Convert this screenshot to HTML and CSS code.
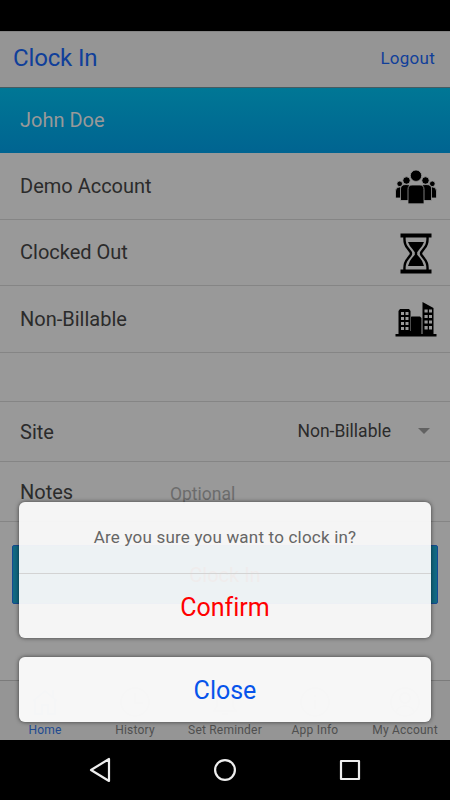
FILE: index.html
```html
<!DOCTYPE html>
<html lang="en">
<head>
<meta charset="utf-8">
<title>Clock In</title>
<link rel="stylesheet" href="styles.css">
</head>
<body>
<div class="phone">
  <div class="status"></div>
  <main class="app">
    <header class="header"><h1>Clock In</h1><a class="logout">Logout</a></header>
    <div class="user">John Doe</div>
    <div class="row">
      <span>Demo Account</span>
      <svg class="icon people" viewBox="0 0 42 42"><g stroke="#999" stroke-width=".8"><circle cx="4.700" cy="14.800" r="2.800"/><path d="M.5 29V22q0-4 4-4t4 4v7z"/><circle cx="37.300" cy="14.800" r="2.800"/><path d="M33.500 29V22q0-4 4-4t4 4v7z"/><circle cx="11.500" cy="11.500" r="3.700"/><path d="M5.500 31.500V20q0-4.500 5.500-4.500T17 20v11.500z"/><circle cx="30.500" cy="11.500" r="3.700"/><path d="M25 31.500V20q0-4.500 6-4.500t5.500 4.500v11.500z"/><path d="M13 34.800V20.500q0-4.500 4-4.500h8q4 0 4 4.500v14.300z"/><circle cx="21" cy="6.700" r="5.700"/></g></svg>
    </div>
    <div class="row">
      <span>Clocked Out</span>
      <svg class="icon hourglass" viewBox="0 0 42 42"><path d="M5.500.5h31v4h-31zM5.500 36.500h31v4h-31z"/><path d="M9.500 4q-.5 7 3 11l3 4q1 1.500 0 3l-3 4q-3.500 4-3 11M32.500 4q.5 7-3 11l-3 4q-1 1.500 0 3l3 4q3.500 4 3 11" fill="none" stroke="#000" stroke-width="2.400"/><path d="M13 9h16q-1.500 4-4 6.500l-2.800 3.800v2.400l2.800 3.300q2.500 2.500 4 8H13q1.500-5.500 4-8l2.800-3.300v-2.400L17 15.500Q14.500 13 13 9z"/></svg>
    </div>
    <div class="row">
      <span>Non-Billable</span>
      <svg class="icon building" viewBox="0 0 42 42"><path d="M.5 33h41v2.500H.5zM3.500 33V10L5 8h9l1.500 2v23zM15 33V17l1.500-1.500H25l1.500 1.500v16zM27.500 33V1l11 6v26z"/><path fill="#999" d="M6 11h3v3H6zm4.500 0h3v3h-3zM6 16h3v3H6zm4.500 0h3v3h-3zM6 21h3v3H6zm4.500 0h3v3h-3zM6 26h3v3H6zm4.500 0h3v3h-3zM29.500 8.500h3.200v3h-3.200zm4.500 0h3v3h-3zm-4.500 5.500h3.200v3h-3.200zm4.500 0h3v3h-3zm-4.500 5.500h3.200v3h-3.200zm4.500 0h3v3h-3zM29.500 25h3.200v3.500h-3.200zm4.500 0h3v3.500h-3z"/><path d="M15.500 16v14" stroke="#999" stroke-width=".5"/></svg>
    </div>
    <div class="gap"></div>
    <div class="field"><label>Site</label><span class="select">Non-Billable</span><i class="caret"></i></div>
    <div class="field"><label>Notes</label><span class="placeholder">Optional</span></div>
    <div class="action"><div class="clock">Clock In</div></div>
    <nav class="tabs">
      <span class="tab active"><svg viewBox="0 0 32 32"><path d="M4 15L16 5l12 10M6 14v14h7v-9h6v9h7V14M24 11V4"/></svg>Home</span>
      <span class="tab"><svg viewBox="0 0 32 32"><circle cx="16" cy="16" r="14"/><path d="M16 7v10h8"/></svg>History</span>
      <span class="tab"><svg viewBox="0 0 32 32"><path d="M5 25h22l-3-5v-8q-2-7-8-7t-8 7v8zM13 28h6"/></svg>Set Reminder</span>
      <span class="tab"><svg viewBox="0 0 32 32"><circle cx="16" cy="16" r="14"/><path d="M16 14v9M16 9v2"/></svg>App Info</span>
      <span class="tab"><svg viewBox="0 0 32 32"><circle cx="16" cy="16" r="14"/><circle cx="16" cy="12" r="5"/><path d="M7 26q2-6 9-6t9 6"/></svg>My Account</span>
    </nav>
  </main>
  <footer class="system">
    <svg viewBox="0 0 450 60" fill="none" stroke="#eee" stroke-width="2.200" stroke-linejoin="round"><path d="M91 30l18-11v22z"/><circle cx="225" cy="30" r="9.900"/><path d="M341 21h18v18h-18z"/></svg>
  </footer>
  <div class="sheet">
    <section class="panel"><p class="question">Are you sure you want to clock in?</p><div class="confirm"><span>Confirm</span></div></section>
    <section class="panel close"><span>Close</span></section>
  </div>
</div>
</body>
</html>
```
FILE: styles.css
```css
* { box-sizing: border-box; }
body { margin: 0; font-family: Roboto, sans-serif; background: #000; }
.phone { position: relative; width: 450px; height: 800px; overflow: hidden; }
.status { height: 31px; background: #000; }
.app { height: 709px; background: #999; color: #2b2b2b; display: flex; flex-direction: column; }
.header { height: 57px; flex: none; padding: 0 15px 3px 13px; display: flex; align-items: center; justify-content: space-between; background: #959595; border-top: 1px solid #858585; border-bottom: 1px solid #465b61; color: #103f9a; }
.header h1 { margin: 0; font-size: 24px; font-weight: 400; letter-spacing: -.15px; }
.logout { font-size: 17px; letter-spacing: .25px; }
.user { height: 65px; flex: none; padding: 0 20px; line-height: 64px; font-size: 20px; color: #999; background: linear-gradient(#007795, #006491); }
.row { height: 66.500px; flex: none; display: flex; align-items: center; justify-content: space-between; padding: 0 13px 0 20px; border-bottom: 1px solid #858585; font-size: 20px; }
.icon { width: 42px; height: 42px; }
.people { margin-top: 8px; }
.hourglass { margin-top: 3px; }
.building { margin-top: 6px; }
.gap { height: 49px; flex: none; border-bottom: 1px solid #858585; }
.field { height: 60px; flex: none; display: flex; align-items: center; padding: 0 20px; border-bottom: 1px solid #858585; font-size: 20px; }
.field label { width: 150px; padding-top: 1px; }
.select { margin-left: auto; font-size: 17.500px; }
.caret { margin-left: 27px; border: 6px solid transparent; border-top-color: #626262; border-bottom: 0; }
.placeholder { padding-top: 5px; font-size: 17.500px; color: #6c6c6c; }
.action { flex: 1; padding: 23px 12px 0; }
.clock { height: 59px; border: 1px solid #164b91; border-radius: 2px; background: #126983; color: #3c0000; font-size: 20px; line-height: 59px; text-align: center; }
.tabs { height: 60px; flex: none; display: grid; grid-template-columns: repeat(5, 1fr); align-items: end; padding-bottom: 3px; border-top: 1px solid #7b7b7b; background: #959595; }
.tab { display: flex; flex-direction: column; align-items: center; gap: 5px; color: #4f4f4f; font-size: 12px; line-height: 14px; letter-spacing: .2px; white-space: nowrap; }
.tab svg { width: 32px; height: 32px; fill: none; stroke: currentColor; stroke-width: 2; }
.active { color: #214a90; }
.system { height: 60px; background: #000; }
.system svg { display: block; width: 450px; height: 60px; }
.sheet { position: absolute; left: 19px; top: 502px; width: 412px; display: flex; flex-direction: column; gap: 19px; text-align: center; font-size: 25px; font-variant-ligatures: none; }
.panel { height: 136px; border-radius: 6px; background: rgba(251, 251, 251, .94); box-shadow: 0 0 4px rgba(0, 0, 0, .6); }
.question { height: 72px; margin: 0; border-bottom: 1px solid #d3d3d3; color: #666; font-size: 17px; line-height: 71px; letter-spacing: .2px; }
.confirm { color: #f00; line-height: 68px; }
.close { height: 65px; background: rgba(249, 249, 249, .985); color: #0754eb; line-height: 67px; }
```
